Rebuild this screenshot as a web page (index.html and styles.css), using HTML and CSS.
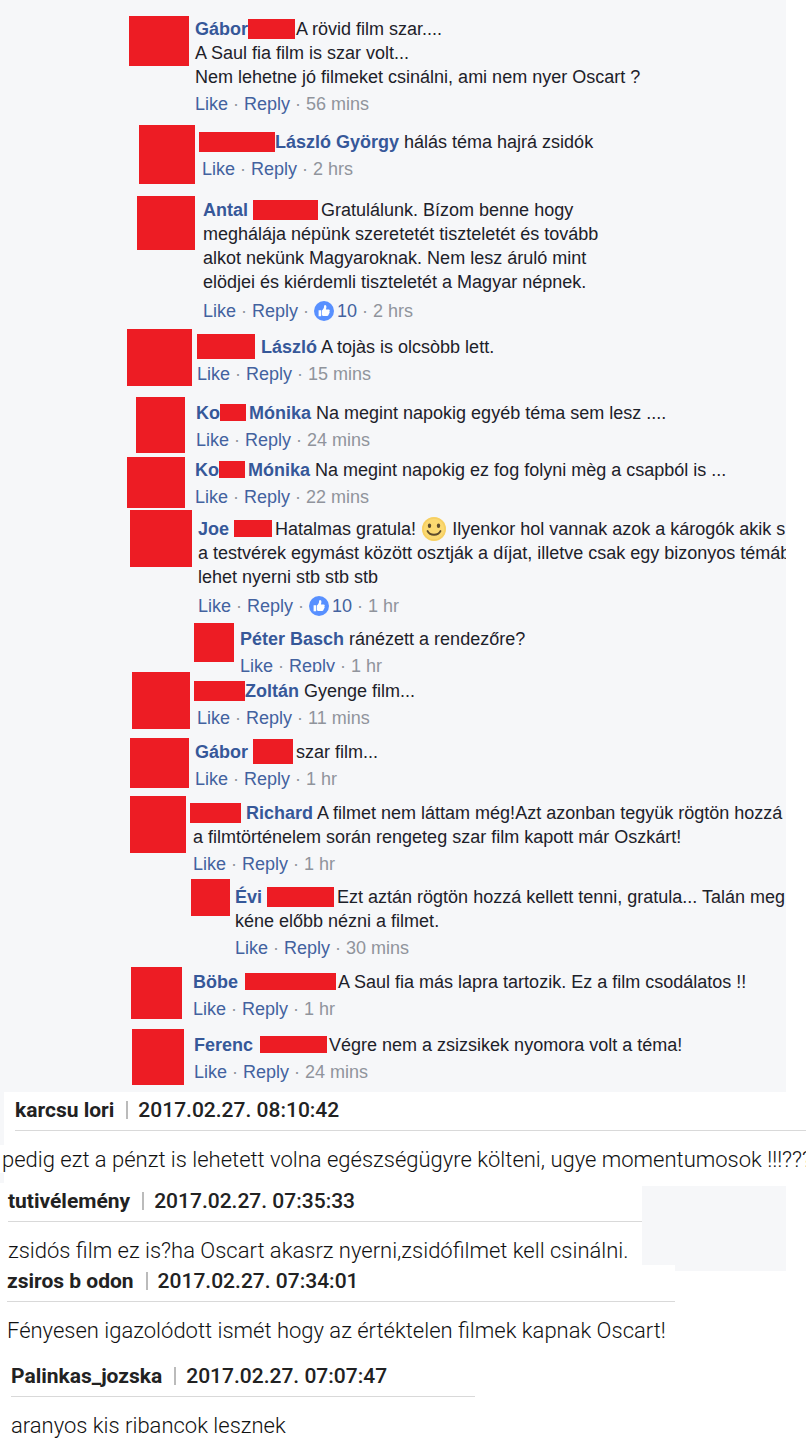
FILE: index.html
```html
<!DOCTYPE html>
<html lang="hu">
<head>
<meta charset="utf-8">
<title>Comments</title>
<link rel="stylesheet" href="styles.css">
</head>
<body>
<svg class="defs" aria-hidden="true">
  <symbol id="thumb" viewBox="0 0 20 20">
    <circle cx="10" cy="10" r="10" fill="#5890ff"/>
    <path fill="#fff" d="M4.6 9.2h2.5v6H4.6zM7.8 9.4c1.4-.8 2-2 2.2-3.300.1-1.500.3-2.200 1-2.200 1.100 0 1.600 1.100 1.400 2.300l-.5 2.200h2.700c1.300 0 1.500 1.400.7 2 .6.600.400 1.400-.2 1.700.3.700 0 1.300-.6 1.500.1.900-.4 1.400-1.300 1.400H9.800c-.9 0-1.400-.5-2-.6z"/>
  </symbol>
  <symbol id="smile" viewBox="0 0 24 24">
    <circle cx="12" cy="12" r="12" fill="#fbd971"/>
    <circle cx="12" cy="12" r="11" fill="none" stroke="#f6cf63" stroke-width="1.500"/>
    <ellipse cx="7.500" cy="8.700" rx="1.700" ry="2.300" fill="#5d4b2c"/>
    <ellipse cx="16.500" cy="8.700" rx="1.700" ry="2.300" fill="#5d4b2c"/>
    <path d="M5.500 14c2.500 5 10.500 5 13 0" fill="none" stroke="#5d4b2c" stroke-width="1.800" stroke-linecap="round"/>
  </symbol>
</svg>

<ul class="feed">
  <li class="comment c1"><div class="avatar"></div><div class="body">
    <p class="text"><a class="name" href="#">Gábor</a><span class="redact flush w46"></span> A rövid film szar....<br>A Saul fia film is szar volt...<br>Nem lehetne jó filmeket csinálni, ami nem nyer Oscart ?</p>
    <p class="actions"><a href="#">Like</a> · <a href="#">Reply</a> · <span>56 mins</span></p></div></li>
  <li class="comment c2"><div class="avatar"></div><div class="body">
    <p class="text"><span class="redact out w76"></span><a class="name" href="#">László György</a> hálás téma hajrá zsidók</p>
    <p class="actions"><a href="#">Like</a> · <a href="#">Reply</a> · <span>2 hrs</span></p></div></li>
  <li class="comment long c3"><div class="avatar"></div><div class="body">
    <p class="text"><a class="name" href="#">Antal</a> <span class="redact w64"></span> Gratulálunk. Bízom benne hogy<br>meghálája népünk szeretetét tiszteletét és tovább<br>alkot nekünk Magyaroknak. Nem lesz áruló mint<br>elödjei és kiérdemli tiszteletét a Magyar népnek.</p>
    <p class="actions"><a href="#">Like</a> · <a href="#">Reply</a> · <a href="#"><svg class="thumb"><use href="#thumb"/></svg>10</a> · <span>2 hrs</span></p></div></li>
  <li class="comment c4"><div class="avatar"></div><div class="body">
    <p class="text"><span class="redact tall lead w58"></span> <a class="name" href="#">László</a> A tojàs is olcsòbb lett.</p>
    <p class="actions"><a href="#">Like</a> · <a href="#">Reply</a> · <span>15 mins</span></p></div></li>
  <li class="comment c5"><div class="avatar"></div><div class="body">
    <p class="text"><a class="name" href="#">Ko<span class="redact short w26"></span> Mónika</a> Na megint napokig egyéb téma sem lesz ....</p>
    <p class="actions"><a href="#">Like</a> · <a href="#">Reply</a> · <span>24 mins</span></p></div></li>
  <li class="comment c6"><div class="avatar"></div><div class="body">
    <p class="text"><a class="name" href="#">Ko<span class="redact short w26"></span> Mónika</a> Na megint napokig ez fog folyni mèg a csapból is ...</p>
    <p class="actions"><a href="#">Like</a> · <a href="#">Reply</a> · <span>22 mins</span></p></div></li>
  <li class="comment long c7"><div class="avatar"></div><div class="body">
    <p class="text"><a class="name" href="#">Joe</a> <span class="redact short w38"></span> Hatalmas gratula! <svg class="smile" role="img" aria-label="smile"><use href="#smile"/></svg> Ilyenkor hol vannak azok a károgók akik s<br>a testvérek egymást között osztják a díjat, illetve csak egy bizonyos témáb<br>lehet nyerni stb stb stb</p>
    <p class="actions"><a href="#">Like</a> · <a href="#">Reply</a> · <a href="#"><svg class="thumb"><use href="#thumb"/></svg>10</a> · <span>1 hr</span></p></div></li>
  <li class="comment c8"><div class="avatar"></div><div class="body">
    <p class="text"><a class="name" href="#">Péter Basch</a> ránézett a rendezőre?</p>
    <p class="actions cropped"><a href="#">Like</a> · <a href="#">Reply</a> · <span>1 hr</span></p></div></li>
  <li class="comment c9"><div class="avatar"></div><div class="body">
    <p class="text"><span class="redact out w52"></span><a class="name" href="#">Zoltán</a> Gyenge film...</p>
    <p class="actions"><a href="#">Like</a> · <a href="#">Reply</a> · <span>11 mins</span></p></div></li>
  <li class="comment c10"><div class="avatar"></div><div class="body">
    <p class="text"><a class="name" href="#">Gábor</a> <span class="redact tall w40"></span> szar film...</p>
    <p class="actions"><a href="#">Like</a> · <a href="#">Reply</a> · <span>1 hr</span></p></div></li>
  <li class="comment c11"><div class="avatar"></div><div class="body">
    <p class="text"><span class="redact out w52"></span> <a class="name" href="#">Richard</a> A filmet nem láttam még!Azt azonban tegyük rögtön hozzá<br>a filmtörténelem során rengeteg szar film kapott már Oszkárt!</p>
    <p class="actions"><a href="#">Like</a> · <a href="#">Reply</a> · <span>1 hr</span></p></div></li>
  <li class="comment c12"><div class="avatar"></div><div class="body">
    <p class="text"><a class="name" href="#">Évi</a> <span class="redact w66"></span> Ezt aztán rögtön hozzá kellett tenni, gratula... Talán meg<br>kéne előbb nézni a filmet.</p>
    <p class="actions"><a href="#">Like</a> · <a href="#">Reply</a> · <span>30 mins</span></p></div></li>
  <li class="comment c13"><div class="avatar"></div><div class="body">
    <p class="text"><a class="name" href="#">Böbe</a> <span class="redact short inset w90"></span> A Saul fia más lapra tartozik. Ez a film csodálatos !!</p>
    <p class="actions"><a href="#">Like</a> · <a href="#">Reply</a> · <span>1 hr</span></p></div></li>
  <li class="comment c14"><div class="avatar"></div><div class="body">
    <p class="text"><a class="name" href="#">Ferenc</a> <span class="redact short inset flush w66"></span> Végre nem a zsizsikek nyomora volt a téma!</p>
    <p class="actions"><a href="#">Like</a> · <a href="#">Reply</a> · <span>24 mins</span></p></div></li>
</ul>

<main class="forum">
  <article class="post p1">
    <header><b>karcsu lori</b><i class="bar"></i><time>2017.02.27. 08:10:42</time></header>
    <p>pedig ezt a pénzt is lehetett volna egészségügyre költeni, ugye momentumosok !!!???</p>
  </article>
  <div class="pair">
    <div class="patch"></div>
    <article class="post p2">
      <header><b>tutivélemény</b><i class="bar"></i><time>2017.02.27. 07:35:33</time></header>
      <p>zsidós film ez is?ha Oscart akasrz nyerni,zsidófilmet kell csinálni.</p>
    </article>
    <article class="post p3">
      <header><b>zsiros b odon</b><i class="bar"></i><time>2017.02.27. 07:34:01</time></header>
      <p>Fényesen igazolódott ismét hogy az értéktelen filmek kapnak Oscart!</p>
    </article>
  </div>
  <article class="post p4">
    <header><b>Palinkas_jozska</b><i class="bar"></i><time>2017.02.27. 07:07:47</time></header>
    <p>aranyos kis ribancok lesznek</p>
  </article>
</main>
</body>
</html>
```
FILE: styles.css
```css
* { box-sizing: border-box; }
body { margin: 0; background: #fff; }
p { margin: 0; }
.defs { display: none; }

/* Social feed */
.feed {
  margin: 0 20px 0 0;
  padding: 16px 0 7px;
  list-style: none;
  background: #f6f7f9;
  color: #1d2129;
  font: 18px/24px "Liberation Sans", Arial, sans-serif;
  overflow: hidden;
}
.comment {
  display: flex;
  align-items: flex-start;
  gap: var(--gap);
  margin-top: var(--space, 0);
  padding-left: var(--indent);
}
.avatar {
  flex: none;
  width: var(--w);
  height: var(--h);
  background: #ed1c24;
}
.body { flex: 1; min-width: 0; padding-top: var(--top); white-space: nowrap; }
.name { color: #365899; font-weight: bold; }
.feed a { text-decoration: none; }
.actions { margin-top: 3px; color: #90949c; }
.actions a { color: #43629f; }
.long .actions { margin-top: 5px; }
.cropped { height: 18px; overflow: hidden; }

.redact {
  display: inline-block;
  height: 20px;
  margin: -4px -2px -1px 0;
  vertical-align: middle;
  background: #ed1c24;
}
.redact.flush { margin-right: -3px; }
.redact.out { margin-left: -3px; margin-right: 0; }
.redact.lead { margin-right: 1px; }
.redact.inset { margin-left: 2px; }
.redact.tall { height: 25px; }
.redact.short { height: 17px; }
.w26 { width: 26px; }
.w38 { width: 38px; }
.w40 { width: 40px; }
.w46 { width: 47px; }
.w52 { width: 51px; }
.w58 { width: 58px; }
.w64 { width: 65px; }
.w66 { width: 67px; }
.w76 { width: 76px; }
.w90 { width: 91px; }

.thumb { width: 20px; height: 20px; margin: -4px 3px -1px 0; vertical-align: middle; }
.smile { width: 24px; height: 24px; margin: -4px 1px -1px; vertical-align: middle; }

.c1 { --indent: 129px; --w: 60px; --h: 50px; --gap: 6px; --top: 1px; }
.c2 { --indent: 139px; --w: 56px; --h: 59px; --gap: 7px; --top: 5px; --space: 9px; }
.c3 { --indent: 137px; --w: 58px; --h: 54px; --gap: 8px; --top: 2px; --space: 12px; }
.c4 { --indent: 127px; --w: 65px; --h: 57px; --gap: 5px; --top: 6px; --space: 6px; }
.c5 { --indent: 136px; --w: 49px; --h: 56px; --gap: 11px; --top: 4px; --space: 11px; }
.c6 { --indent: 127px; --w: 58px; --h: 51px; --gap: 10px; --top: 1px; --space: 4px; }
.c7 { --indent: 130px; --w: 62px; --h: 57px; --gap: 6px; --top: 7px; --space: 1px; }
.c8 { --indent: 194px; --w: 40px; --h: 39px; --gap: 6px; --top: 4px; --space: 5px; }
.c9 { --indent: 132px; --w: 58px; --h: 57px; --gap: 7px; --top: 7px; }
.c10 { --indent: 130px; --w: 59px; --h: 50px; --gap: 6px; --top: 2px; --space: 8px; }
.c11 { --indent: 130px; --w: 56px; --h: 57px; --gap: 7px; --top: 5px; --space: 5px; }
.c12 { --indent: 191px; --w: 39px; --h: 37px; --gap: 5px; --top: 6px; --space: 3px; }
.c13 { --indent: 131px; --w: 51px; --h: 52px; --gap: 11px; --top: 3px; --space: 7px; }
.c14 { --indent: 132px; --w: 52px; --h: 56px; --gap: 10px; --top: 4px; --space: 8px; }

/* Forum posts */
.forum { color: #222; font-family: Roboto, sans-serif; overflow: hidden; }
.post { white-space: nowrap; }
.post header {
  display: flex;
  align-items: center;
  padding-bottom: 8px;
  border-bottom: 1px solid #d9d9d9;
  font-size: 21px;
  font-weight: 500;
  line-height: 24px;
}
.post b { font-weight: 700; }
.post p { padding-top: 15px; color: #111; font-size: 22px; font-weight: 350; line-height: 28px; }
.bar { width: 2px; height: 18px; margin: 0 10px 0 12px; background: #bbb; }

.p1 {
  padding: 6px 0 12px;
  background:
    linear-gradient(#f6f7f9, #f6f7f9) 0 0 / 4px 53px no-repeat,
    linear-gradient(#f6f7f9, #f6f7f9) 0 81px / 4px 10px no-repeat;
}
.p1 header { margin-left: 15px; }
.p1 p { padding-left: 2px; }
.pair { display: grid; grid-template-columns: 1fr 33px 111px; margin-right: 20px; }
.patch { grid-area: 1 / 1 / 3 / 4; justify-self: end; width: 144px; height: 85px; background: #f6f7f9; }
.p2 { grid-area: 1 / 1; padding-top: 3px; }
.p2 header { margin-left: 8px; }
.p2 p { padding-left: 8px; }
.p3 { grid-area: 2 / 1 / 3 / 3; padding-top: 4px; background: #fff; }
.p3 header { margin-left: 7px; }
.p3 p { padding-left: 7px; }
.p4 { padding: 19px 0 5px 11px; }
.p4 header { max-width: 464px; }
```
